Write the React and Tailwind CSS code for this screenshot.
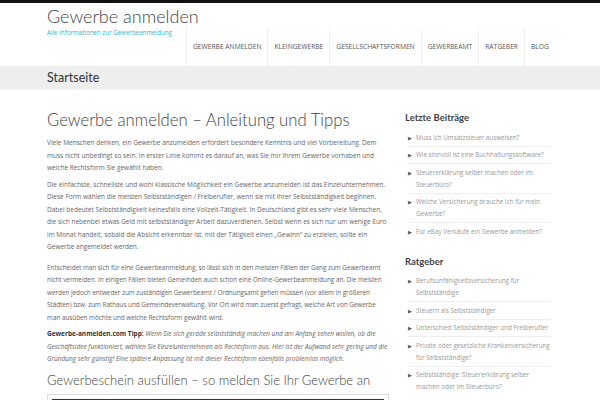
const nav = ["Gewerbe anmelden", "Kleingewerbe", "Gesellschaftsformen", "Gewerbeamt", "Ratgeber", "Blog"];

const latest = [
  "Muss ich Umsatzsteuer ausweisen?",
  "Wie sinnvoll ist eine Buchhaltungssoftware?",
  "Steuererklärung selber machen oder im Steuerbüro?",
  "Welche Versicherung brauche ich für mein Gewerbe?",
  "Für eBay Verkäufe ein Gewerbe anmelden?",
];

const ratgeber = [
  "Berufsunfähigkeitsversicherung für Selbstständige",
  "Steuern als Selbstständiger",
  "Unterschied Selbstständiger und Freiberufler",
  "Private oder gesetzliche Krankenversicherung für Selbstständige?",
  "Selbstständige: Steuererklärung selber machen oder im Steuerbüro?",
];

const lato = { fontFamily: "Lato, 'Open Sans', sans-serif" };

function Widget({ title, items }) {
  return (
    <div className="mb-[15px]">
      <h3 className="text-[9.5px] font-bold text-[#444] leading-[14px] mb-[4px]" style={lato}>{title}</h3>
      <ul className="pl-[3px] w-[146px]">
        {items.map((t, i) => (
          <li
            key={t}
            className={`flex gap-[4px] pt-[2.5px] pb-[2px] text-[6.3px] leading-[12px] text-[#999] ${i < items.length - 1 ? "border-b border-[#eee]" : ""}`}
          >
            <span className="text-[5px] leading-[12px] text-[#555] shrink-0">▶</span>
            <span>{t}</span>
          </li>
        ))}
      </ul>
    </div>
  );
}

export default function App() {
  return (
    <div className="w-[600px] h-[400px] overflow-hidden bg-white" style={{ fontFamily: "'Open Sans', sans-serif" }}>
      <div className="h-[3px] bg-[#111]" />
      <header className="w-[506px] mx-auto flex">
        <div className="pt-[1px] w-[139px] shrink-0">
          <div className="text-[18px] font-light leading-[24px] text-[#444] whitespace-nowrap" style={lato}>Gewerbe anmelden</div>
          <div className="text-[6.2px] leading-[10px] text-[#35b6c8] whitespace-nowrap">Alle Informationen zur Gewerbeanmeldung</div>
        </div>
        <nav className="flex mt-[25px] h-[38px] border-l border-[#f0f0f0]">
          {nav.map((n) => (
            <div key={n} className="px-[6px] flex items-center whitespace-nowrap border-r border-[#f0f0f0] text-[6.7px] uppercase text-[#555] last:border-r-0">
              {n}
            </div>
          ))}
        </nav>
      </header>
      <div className="bg-[#eee] h-[24px] border-b border-[#f5f5f5]">
        <div className="w-[506px] mx-auto text-[12.5px] leading-[24px] text-[#333]" style={lato}>Startseite</div>
      </div>
      <div className="w-[506px] mx-auto flex justify-between pt-[18px]">
        <main className="w-[342px] shrink-0 text-[6.5px] leading-[12.5px] text-[#666]">
          <h1 className="text-[16.7px] font-light leading-[24px] text-[#444] mb-[5px]" style={lato}>
            Gewerbe anmelden – Anleitung und Tipps
          </h1>
          <p className="mb-[4px]">
            Viele Menschen denken, ein Gewerbe anzumelden erfordert besondere Kenntnis und viel Vorbereitung. Dem muss nicht unbedingt so sein. In erster Linie kommt es darauf an, was Sie mir Ihrem Gewerbe vorhaben und welche Rechtsform Sie gewählt haben.
          </p>
          <p className="mb-[8px]">
            Die einfachste, schnellste und wohl klassische Möglichkeit ein Gewerbe anzumelden ist das Einzelunternehmen. Diese Form wählen die meisten Selbstständigen / Freiberufler, wenn sie mit ihrer Selbstständigkeit beginnen. Dabei bedeutet Selbstständigkeit keinesfalls eine Vollzeit-Tätigkeit. In Deutschland gibt es sehr viele Menschen, die sich nebenbei etwas Geld mit selbstständiger Arbeit dazuverdienen. Selbst wenn es sich nur um wenige Euro im Monat handelt, sobald die Absicht erkennbar ist, mit der Tätigkeit einen „Gewinn“ zu erzielen, sollte ein Gewerbe angemeldet werden.
          </p>
          <p className="mb-[4px] text-[6.4px] tracking-[-0.04px]">
            Entscheidet man sich für eine Gewerbeanmeldung, so lässt sich in den meisten Fällen der Gang zum Gewerbeamt nicht vermeiden. In einigen Fällen bieten Gemeinden auch schon eine Online-Gewerbeanmeldung an. Die meisten werden jedoch entweder zum zuständigen Gewerbeamt / Ordnungsamt gehen müssen (vor allem in größeren Städten) bzw. zum Rathaus und Gemeindeverwaltung. Vor Ort wird man zuerst gefragt, welche Art von Gewerbe man ausüben möchte und welche Rechtsform gewählt wird.
          </p>
          <p className="mb-[4px]">
            <strong className="font-bold text-[#333]">Gewerbe-anmelden.com Tipp:</strong>{" "}
            <em>
              Wenn Sie sich gerade selbstständig machen und am Anfang sehen wollen, ob die Geschäftsidee funktioniert, wählen Sie Einzelunternehmen als Rechtsform aus. Hier ist der Aufwand sehr gering und die Gründung sehr günstig! Eine spätere Anpassung ist mit dieser Rechtsform ebenfalls problemlos möglich.
            </em>
          </p>
          <h2 className="text-[13px] font-light leading-[20px] text-[#444] mb-[4px] whitespace-nowrap" style={lato}>
            Gewerbeschein ausfüllen – so melden Sie Ihr Gewerbe an
          </h2>
          <div className="border border-[#ddd] p-[4px] pb-0">
            <div className="h-[20px] bg-[#333]" />
          </div>
        </main>
        <aside className="w-[148px] shrink-0 pt-[3px]">
          <Widget title="Letzte Beiträge" items={latest} />
          <Widget title="Ratgeber" items={ratgeber} />
        </aside>
      </div>
    </div>
  );
}
